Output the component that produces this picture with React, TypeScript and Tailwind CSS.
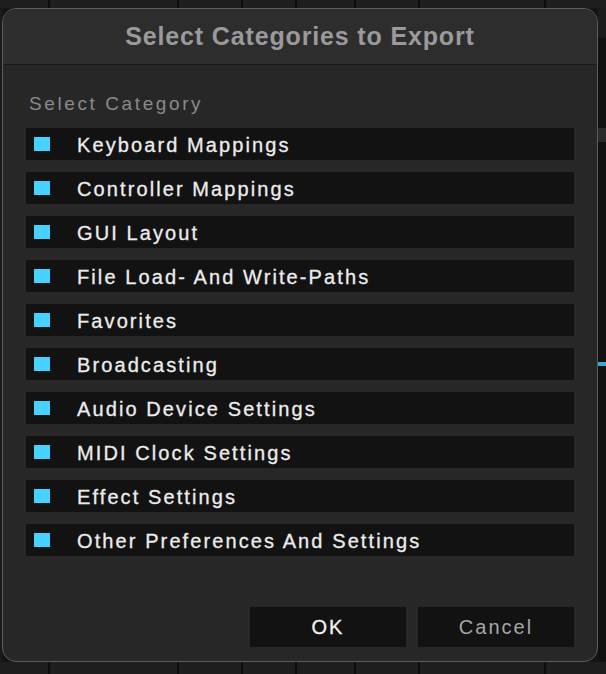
const categories = [
  "Keyboard Mappings",
  "Controller Mappings",
  "GUI Layout",
  "File Load- And Write-Paths",
  "Favorites",
  "Broadcasting",
  "Audio Device Settings",
  "MIDI Clock Settings",
  "Effect Settings",
  "Other Preferences And Settings",
];

function Strip({ h }: { h: string }) {
  // bits of the app behind the dialog
  const cells = [48, 127, 62, 52, 58, 62, 124, 60];
  return (
    <div className={`flex gap-[2px] bg-[#0c0c0c] ${h}`}>
      {cells.map((w, i) => (
        <div key={i} className="bg-[#1e1e1e]" style={{ width: w }} />
      ))}
    </div>
  );
}

export default function App() {
  return (
    <div
      className="w-[606px] h-[674px] bg-[#141414] flex flex-col overflow-hidden"
      style={{ fontFamily: '"Liberation Sans", Arial, sans-serif' }}
    >
      <Strip h="h-[8px]" />
      <div className="flex h-[654px]">
        <div className="w-[2px] bg-[#1a1a1a]" />
        <div className="w-[596px] h-full rounded-[14px] border border-[#5c5c5c] bg-[#272727] flex flex-col overflow-hidden">
          <div className="h-[56px] shrink-0 bg-[#2d2d2d] border-b border-[#1a1a1a] flex items-center justify-center">
            <span className="text-[25px] font-bold text-[#9a9a9a] tracking-[0.85px]">
              Select Categories to Export
            </span>
          </div>
          <div className="px-[23px] pt-[28px]">
            <div className="pl-[3px] text-[19px] text-[#8a8a8a] tracking-[2.6px] leading-[22px]">
              Select Category
            </div>
            <div className="mt-[13px] flex flex-col gap-[12px]">
              {categories.map((c) => (
                <div key={c} className="h-[32px] bg-[#121212] flex items-center">
                  <div className="ml-[8px] w-[16px] h-[14px] bg-[#45d2ff]" />
                  <span className="ml-[27px] pt-[2px] text-[20px] text-[#ececec] tracking-[2.1px] [-webkit-text-stroke:0.3px_#ececec]">
                    {c}
                  </span>
                </div>
              ))}
            </div>
          </div>
          <div className="mt-auto mb-[14px] px-[23px] flex justify-end gap-[12px]">
            <button className="w-[156px] h-[40px] bg-[#121212] text-[20px] text-[#f2f2f2] tracking-[2px] [-webkit-text-stroke:0.3px_#f2f2f2]">
              OK
            </button>
            <button className="w-[156px] h-[40px] bg-[#121212] text-[20px] text-[#a6a6a6] tracking-[2px]">
              Cancel
            </button>
          </div>
        </div>
        <div className="flex-1 flex flex-col bg-[#101010]">
          <div className="h-[30px] bg-[#1c1c1c]" />
          <div className="h-[90px]" />
          <div className="h-[14px] bg-[#2a2a2a]" />
          <div className="h-[220px]" />
          <div className="h-[4px] bg-[#3aa8d0]" />
        </div>
      </div>
      <Strip h="flex-1" />
    </div>
  );
}
